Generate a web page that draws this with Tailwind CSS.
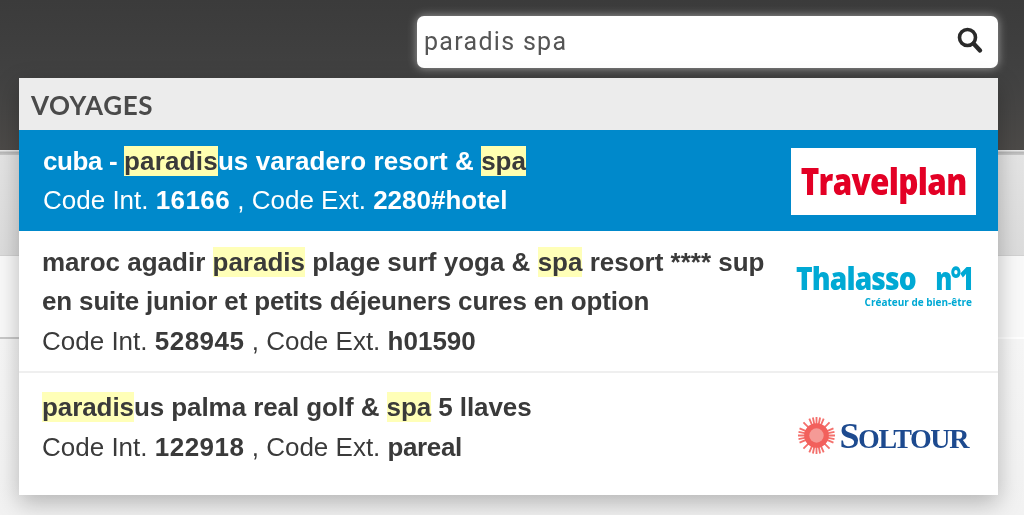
<!DOCTYPE html>
<html><head><meta charset="utf-8"><script src="https://cdn.jsdelivr.net/npm/@tailwindcss/browser@4"></script></head>
<body class="w-[1024px] h-[515px] overflow-hidden bg-white font-['Liberation_Sans',sans-serif]">
<div class="relative h-[515px] overflow-hidden">
  <header class="h-[150px] bg-gradient-to-b from-[#3b3b3b] via-[#414141] to-[#4c4a48] flex justify-end items-start pt-[16px] pr-[26px]">
    <div class="w-[581px] h-[52px] bg-white rounded-[7px] shadow-[0_0_10px_rgba(255,255,255,0.5)] flex items-center justify-between pl-[7px] pr-[14px]">
      <span class="text-[25px] text-[#555] font-['Roboto',sans-serif] tracking-[1.3px] blur-[0.4px] -mt-[1px]">paradis spa</span>
      <svg class="w-[28px] h-[28px] -mt-[5px]" viewBox="0 0 28 28" fill="none" stroke="#2a2a2a"><circle cx="11.5" cy="11.5" r="8" stroke-width="3.6"/><path d="M17.5 17.5 L24 24.5" stroke-width="4.4" stroke-linecap="round"/></svg>
    </div>
  </header>
  <div class="h-[5px] bg-gradient-to-b from-[#f4f4f4] via-[#b8b8b8] to-[#c8c8c8]"></div>
  <div class="h-[101px] bg-gradient-to-b from-[#e4e4e4] to-[#dcdcdc] border-b border-[#d2d2d2]"></div>
  <div class="h-[81px] bg-[#f9f9f9]"></div>
  <div class="h-[2px] w-[300px] bg-[#c8c8c8]"></div>
  <div class="h-[176px] bg-gradient-to-b from-[#f6f6f6] to-[#f2f2f2]"></div>

  <div class="absolute left-[19px] top-[78px] w-[979px] h-[417px] bg-white shadow-[0_8px_22px_rgba(0,0,0,0.26)] flex flex-col blur-[0.4px]">
    <div class="h-[52px] shrink-0 bg-[#ececec] flex items-center pl-[12px] pt-[2px] text-[26px] tracking-[0.6px] font-bold text-[#4a4a4a] font-['Lato',sans-serif]">VOYAGES</div>
    <div class="h-[101px] shrink-0 bg-[#0089cb] text-white flex items-center justify-between pl-[24px] pr-[22px]">
      <div class="text-[26px] leading-[39px]">
        <div class="font-bold whitespace-nowrap"><span class="tracking-[-0.4px]">cuba - </span><mark class="bg-[#ffffb0] text-[#3a3a3a] tracking-[0.2px]">paradis</mark><span class="tracking-[0.08px]">us varadero resort &amp; </span><mark class="bg-[#ffffb0] text-[#3a3a3a]">spa</mark></div>
        <div>Code Int. <b class="tracking-[0.4px]">16166</b> , Code Ext. <b>2280#hotel</b></div>
      </div>
      <div class="w-[185px] h-[67px] mt-[1px] bg-white flex items-center justify-center overflow-hidden"><span class="text-[#e30025] font-extrabold text-[37px] tracking-[-0.8px] scale-x-[0.85] font-['Open_Sans',sans-serif] blur-[0.5px]">Travelplan</span></div>
    </div>
    <div class="h-[142px] shrink-0 border-b-2 border-[#efefef] text-[#3a3a3a] flex items-center justify-between pl-[23px] pr-[26px] pt-[2px]">
      <div class="text-[26px] leading-[39.5px] w-[730px] shrink-0">
        <div class="font-bold whitespace-nowrap">maroc agadir <mark class="bg-[#ffffb8] text-[#3a3a3a]">paradis</mark> plage surf yoga &amp; <mark class="bg-[#ffffb8] text-[#3a3a3a]">spa</mark> resort **** sup<br><span class="tracking-[-0.16px]">en suite junior et petits déjeuners cures en option</span></div>
        <div>Code Int. <b class="tracking-[0.5px]">528945</b> , Code Ext. <b>h01590</b></div>
      </div>
      <div class="w-[176px] flex flex-col items-end text-[#00a9d4] font-['Open_Sans',sans-serif] blur-[0.5px] font-extrabold -mt-[37px]">
        <div class="flex items-baseline justify-between w-[176px] text-[32px] leading-[34px] whitespace-nowrap">
          <span class="tracking-[-1px] scale-x-[0.88] origin-left -mr-[12px]">Thalasso</span>
          <span class="tracking-[-2.5px] scale-x-[0.8] origin-right">n°1</span>
        </div>
        <span class="text-[10px] leading-[10px] mt-[2px] font-bold whitespace-nowrap">Créateur de bien-être</span>
      </div>
    </div>
    <div class="flex-1 text-[#3a3a3a] flex items-start justify-between pl-[23px] pr-[30px] pt-[15px]">
      <div class="text-[26px] leading-[39.5px]">
        <div class="font-bold tracking-[-0.08px]"><mark class="bg-[#ffffb8] text-[#3a3a3a]">paradis</mark>us palma real golf &amp; <mark class="bg-[#ffffb8] text-[#3a3a3a]">spa</mark> 5 llaves</div>
        <div>Code Int. <b class="tracking-[0.5px]">122918</b> , Code Ext. <b class="tracking-[-0.4px]">pareal</b></div>
      </div>
      <div class="flex items-center gap-[4px] mt-[29px] blur-[0.7px]">
        <svg class="w-[37px] h-[37px]" viewBox="0 0 36 36"><g stroke="#f4706c" stroke-width="1.8"><path d="M18 0V36M0 18H36M5.3 5.3L30.7 30.7M30.7 5.3L5.3 30.7M11 1.5L25 34.5M25 1.5L11 34.5M1.5 11L34.5 25M1.5 25L34.5 11M14.5 .5L21.5 35.5M21.5 .5L14.5 35.5M.5 14.5L35.5 21.5M.5 21.5L35.5 14.5"/></g><circle cx="18" cy="18" r="12" fill="#f2605c"/><circle cx="18" cy="18" r="7" fill="#f59a96"/></svg>
        <span class="text-[#1d4a8f] font-bold font-['Liberation_Serif',serif] text-[36px] leading-none tracking-[-1.4px]">S<span class="text-[28px]">OLTOUR</span></span>
      </div>
    </div>
  </div>
</div>
</body></html>
